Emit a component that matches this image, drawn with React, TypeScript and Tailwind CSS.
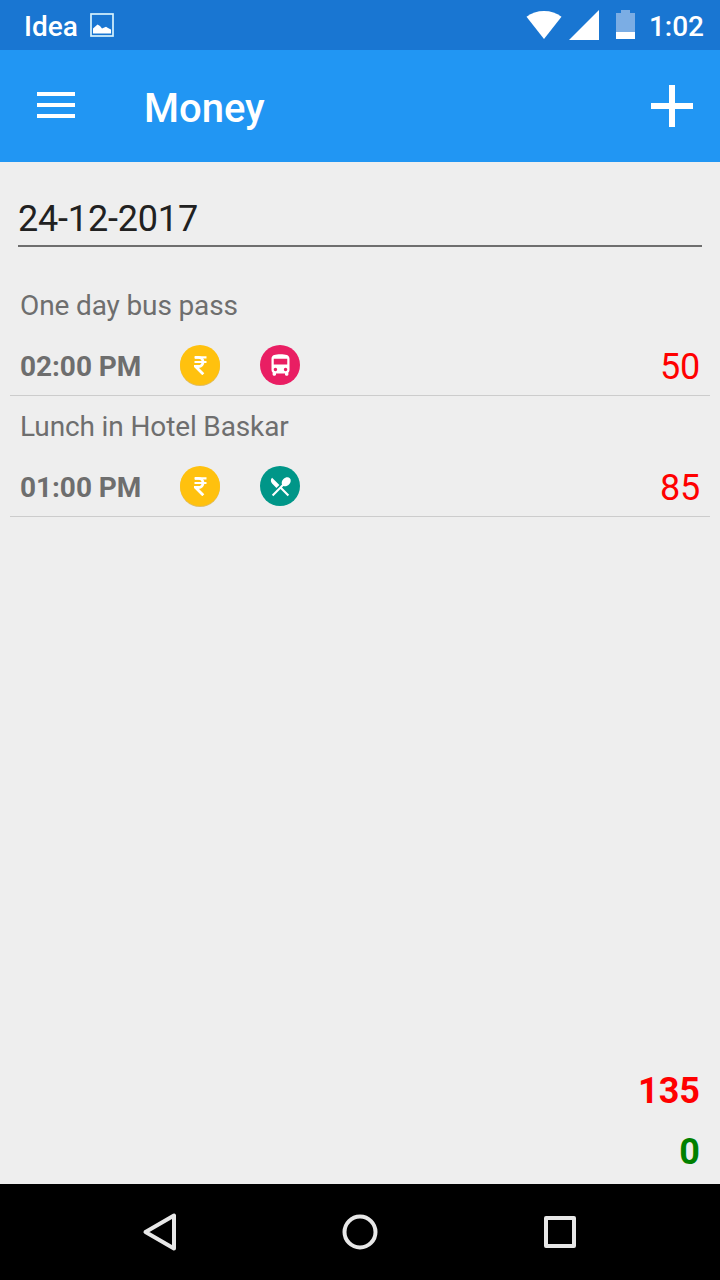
import type { ReactNode } from "react";
import { MdDirectionsBus, MdRestaurantMenu } from "react-icons/md";

type Entry = {
  title: string;
  time: string;
  amount: number;
  color: string;
  icon: ReactNode;
};

const entries: Entry[] = [
  {
    title: "One day bus pass",
    time: "02:00 PM",
    amount: 50,
    color: "bg-[#e91e63]",
    icon: <MdDirectionsBus size={27} />,
  },
  {
    title: "Lunch in Hotel Baskar",
    time: "01:00 PM",
    amount: 85,
    color: "bg-[#009688]",
    icon: <MdRestaurantMenu size={25} />,
  },
];

function StatusBar() {
  return (
    <div className="flex h-[50px] items-center bg-[#1976d2] pl-6 pr-4 text-[28px] font-medium leading-[33px] text-white">
      <span className="mt-[3px]">Idea</span>
      <svg className="ml-3" width="24" height="24" viewBox="0 0 24 24">
        <rect x="1" y="1" width="22" height="22" fill="none" stroke="#d6f3fd" strokeWidth="1.7" />
        <path d="M3 20.5V15.500L7.500 11.500L10 13L12 15.500L16 13.800L18 15L21 16.500V20.500Z" fill="white" />
      </svg>
      <svg className="ml-auto" width="36" height="30" viewBox="0 0 36 30" fill="white">
        <path d="M0.500 6.800Q8 1 18 1T35.500 6.800L18 29Z" />
      </svg>
      <svg className="ml-[7px]" width="30" height="30" viewBox="0 0 30 30" fill="white">
        <path d="M30 0V30H0Z" />
      </svg>
      <svg className="ml-[17px]" width="19" height="30" viewBox="0 0 19 30">
        <path d="M0 3H5V0H14V3H19V22H0Z" fill="#7bade4" />
        <path d="M0 22H19V29H0Z" fill="white" />
      </svg>
      <span className="ml-[14px] mt-[3px]">1:02</span>
    </div>
  );
}

function AppBar() {
  return (
    <header className="flex h-28 items-center bg-[#2196f3] pl-[37px] pr-[27px] text-white">
      <div className="mb-0.5 flex w-[38px] flex-col gap-[7px]">
        <div className="h-1 bg-white" />
        <div className="h-1 bg-white" />
        <div className="h-1 bg-white" />
      </div>
      <h1 className="ml-[69px] mt-1.5 text-[40px] font-medium leading-[48px]">Money</h1>
      <svg className="ml-auto" width="42" height="42" viewBox="0 0 42 42" fill="white">
        <path d="M18 0H24V18H42V24H24V42H18V24H0V18H18Z" />
      </svg>
    </header>
  );
}

function RupeeCoin() {
  return (
    <div className="flex size-10 items-center justify-center rounded-full bg-[#ffc10e] shadow-[0_1px_0_#e0bd62]">
      <svg width="13" height="19" viewBox="0 0 13 19" fill="none" stroke="white" strokeWidth="2.800">
        <path d="M0.500 1.400H12.500M0.500 6H12.500" strokeWidth="2.200" />
        <path d="M1 1.400H4.500C10.500 1.400 10.500 10.500 4.500 10.500H1.500L9.300 18.300" />
      </svg>
    </div>
  );
}

function EntryRow({ entry }: { entry: Entry }) {
  return (
    <div className="h-[121px] border-b border-[#cccccc] px-[10px] pt-[14px]">
      <p className="text-[28px] leading-[33px] tracking-[-0.13px] text-[#6e6e6e]">{entry.title}</p>
      <div className="mt-[22px] flex h-[42px] items-center">
        <span className="mt-[3px] w-40 text-[28px] font-bold leading-[33px] tracking-[-0.05px] text-[#6e6e6e]">
          {entry.time}
        </span>
        <RupeeCoin />
        <div className={`ml-10 flex size-10 items-center justify-center rounded-full text-white ${entry.color}`}>
          {entry.icon}
        </div>
        <span className="ml-auto mt-[3px] text-[36px] leading-[42px] tracking-[-0.2px] text-[#ff0000]">
          {entry.amount}
        </span>
      </div>
    </div>
  );
}

function NavBar() {
  return (
    <nav className="flex h-24 items-center justify-center gap-[164px] bg-black">
      <svg width="36" height="40" viewBox="0 0 36 40" fill="none" stroke="#e8e8e8" strokeWidth="4" strokeLinejoin="round">
        <path d="M3.500 20L32 3.500V36.500Z" />
      </svg>
      <svg width="36" height="36" viewBox="0 0 36 36" fill="none" stroke="#e8e8e8" strokeWidth="4">
        <circle cx="18" cy="18" r="15.500" />
      </svg>
      <svg width="36" height="36" viewBox="0 0 36 36" fill="none" stroke="#e8e8e8" strokeWidth="4" strokeLinejoin="round">
        <rect x="4" y="4" width="28" height="28" />
      </svg>
    </nav>
  );
}

export default function App() {
  return (
    <div className="flex h-[1280px] w-[720px] flex-col bg-[#eeeeee] font-[Roboto,sans-serif]">
      <StatusBar />
      <AppBar />
      <main className="flex flex-1 flex-col">
        <div className="mx-[18px] mt-9 h-[49px] border-b-2 border-[#6e6e6e] text-[36px] leading-[42px] tracking-[-0.18px] text-[#212121]">
          24-12-2017
        </div>
        <div className="mx-[10px] mt-7">
          {entries.map((entry) => (
            <EntryRow key={entry.title} entry={entry} />
          ))}
        </div>
        <div className="mt-auto flex flex-col gap-[19px] pb-[11px] pr-5 text-right text-[36px] font-bold leading-[42px]">
          <span className="text-[#ff0000]">135</span>
          <span className="text-[#008000]">0</span>
        </div>
      </main>
      <NavBar />
    </div>
  );
}
